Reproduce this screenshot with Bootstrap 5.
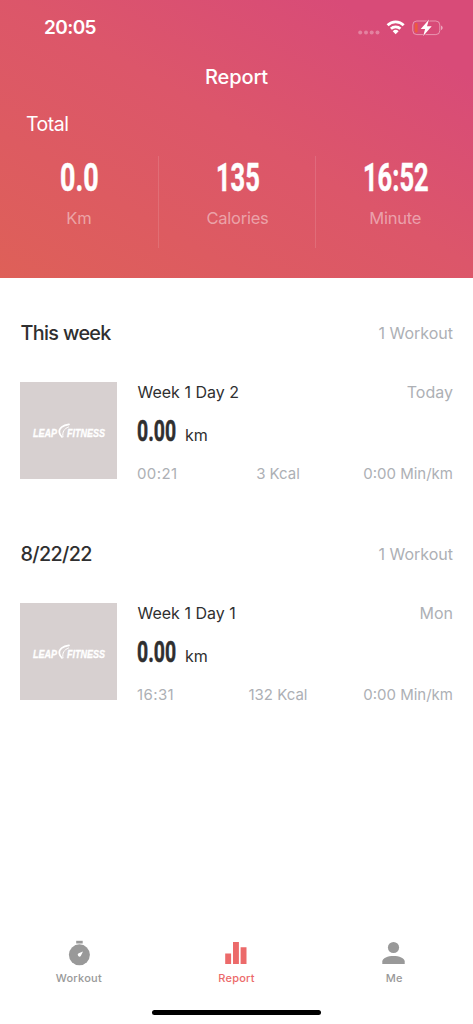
<!DOCTYPE html>
<html lang="en">
<head>
  <meta charset="UTF-8">
  <meta name="viewport" content="width=device-width, initial-scale=1">
  <title>Report</title>
  <link href="https://cdn.jsdelivr.net/npm/bootstrap@5.3.0/dist/css/bootstrap.min.css" rel="stylesheet">
  <script src="https://cdn.jsdelivr.net/npm/bootstrap@5.3.0/dist/js/bootstrap.bundle.min.js" defer></script>
  <style>
    body {
      background-color: #fff;
      color: #2f2f30;
      font-family: Inter, "Liberation Sans", sans-serif;
      height: 1024px;
      overflow: hidden;
    }

    svg {
      display: block;
    }

    .report-header {
      height: 278px;
      background: linear-gradient(to top right, #de6058 0%, #dc566a 52%, #d84b78 86%, #d84b78 100%);
    }

    .status-bar {
      height: 55px;
      padding: 0 30px 0 44px;
    }

    .status-time {
      font-size: 19px;
      font-weight: 600;
      letter-spacing: -0.6px;
      padding-top: 1px;
    }

    .page-title {
      height: 44px;
      font-size: 20px;
      font-weight: 500;
      letter-spacing: -0.1px;
    }

    .total-label {
      height: 50px;
      padding: 2px 0 0 26px;
      font-size: 19.5px;
      letter-spacing: -0.5px;
    }

    .totals {
      padding-top: 7px;
    }

    .total-item {
      height: 92px;
    }

    .total-item + .total-item {
      border-left: 1px solid rgba(255, 255, 255, 0.12);
      padding-left: 1px;
    }

    .total-item svg {
      margin-top: -3px;
    }

    .total-unit {
      margin-top: 3px;
      font-size: 16.5px;
      line-height: 24px;
      letter-spacing: -0.25px;
      color: rgba(255, 255, 255, 0.45);
    }

    /* condensed numerals */
    .digits {
      font-family: Roboto, "Liberation Sans", sans-serif;
      font-weight: 700;
      fill: currentColor;
      stroke: currentColor;
      stroke-width: 0.5px;
    }

    .week-group {
      padding: 35px 20px 10px;
    }

    .week-head {
      height: 40px;
      margin-bottom: 29px;
    }

    .week-title {
      font-size: 19.8px;
      font-weight: 500;
      letter-spacing: -0.65px;
      padding: 2px 0 0 0.5px;
    }

    .muted-text {
      color: #adb0b5;
      font-size: 16px;
    }

    .thumb {
      width: 97px;
      height: 97px;
      flex: none;
      background-color: #d7d0d0;
    }

    .thumb text {
      font: italic 700 10.3px "Liberation Sans", sans-serif;
      fill: #fff;
      stroke: #fff;
      stroke-width: 0.3px;
    }

    .workout-info {
      margin: -2px 0 0 20px;
    }

    .workout-name {
      height: 23px;
      font-size: 16px;
      padding-left: 0.5px;
    }

    .workout-distance {
      height: 55px;
      font-size: 16px;
    }

    .workout-stats {
      display: grid;
      grid-template-columns: 96px 90px 1fr;
      height: 31px;
      padding-top: 2px;
      align-items: center;
      font-size: 15px;
      color: #adb0b5;
    }

    .workout-time {
      letter-spacing: 0.4px;
    }

    .tab-bar {
      height: 94px;
      padding-top: 10px;
    }

    .tab-item {
      color: #999;
      font-size: 11px;
      font-weight: 500;
      letter-spacing: 0.25px;
    }

    .tab-item span {
      line-height: 16px;
      margin-top: 2px;
    }

    .tab-item.selected {
      color: #ec6a6a;
    }

    .home-bar {
      width: 169px;
      height: 5px;
      margin-bottom: 9px;
      background-color: #000;
    }
  </style>
</head>
<body class="d-flex flex-column">

  <header class="report-header text-white">
    <div class="status-bar d-flex align-items-center justify-content-between">
      <span class="status-time">20:05</span>
      <svg width="86" height="20" viewBox="0 0 86 20">
        <!-- signal dots -->
        <g fill="#fff" opacity="0.3">
          <circle cx="3.2" cy="14.5" r="2"/>
          <circle cx="9" cy="14.5" r="2"/>
          <circle cx="14.7" cy="14.5" r="2"/>
          <circle cx="20.5" cy="14.5" r="2"/>
        </g>
        <!-- wifi -->
        <g fill="none" stroke="#fff" stroke-width="2.7">
          <path d="M30.600 7.200a11.200 11.200 0 0 1 16.100 0"/>
          <path d="M33.900 10.800a6.700 6.700 0 0 1 9.500 0"/>
        </g>
        <path fill="#fff" d="M38.650 16.300 35.700 13.300a4.200 4.200 0 0 1 5.900 0z"/>
        <!-- battery -->
        <rect x="55.800" y="3" width="27" height="13.600" rx="4" fill="none" stroke="#fff" stroke-opacity="0.42"/>
        <rect x="57.800" y="5" width="2.800" height="9.600" rx="1" fill="#ec5a3e"/>
        <path fill="#fff" opacity="0.5" d="M84 7.500c2.200.8 2.200 3.800 0 4.600z"/>
        <path fill="#fff" stroke="#d84b78" stroke-width="1.400" paint-order="stroke" d="M72 1.600 63.700 11h4.400l-1.900 7 8.500-9.800h-4.700z"/>
      </svg>
    </div>
    <div class="page-title d-flex align-items-center justify-content-center">Report</div>
    <div class="total-label d-flex align-items-center">Total</div>
    <div class="totals row g-0 text-center">
      <div class="total-item col-4">
        <svg class="digits mx-auto" width="42" height="50"><text transform="translate(2 38) scale(0.680 1)" font-size="39.500">0.0</text></svg>
        <div class="total-unit">Km</div>
      </div>
      <div class="total-item col-4">
        <svg class="digits mx-auto" width="46" height="50"><text transform="translate(2 38) scale(0.645 1)" font-size="39.500">135</text></svg>
        <div class="total-unit">Calories</div>
      </div>
      <div class="total-item col-4">
        <svg class="digits mx-auto" width="68" height="50"><text transform="translate(2 38) scale(0.645 1)" font-size="39.500">16:52</text></svg>
        <div class="total-unit">Minute</div>
      </div>
    </div>
  </header>

  <main class="flex-grow-1">
    <section class="week-group">
      <div class="week-head d-flex align-items-center justify-content-between">
        <span class="week-title">This week</span>
        <span class="muted-text">1 Workout</span>
      </div>
      <div class="d-flex align-items-start">
        <svg class="thumb" viewBox="0 0 97 97">
          <text transform="translate(13 55.200) scale(0.875 1)">LEAP</text>
          <g fill="none" stroke="#fff" stroke-linecap="round">
            <path stroke-width="1.700" d="M49 42.300c-6 .8-10.600 4-9.600 8.400.4 1.700 1.300 3 2.600 4.300"/>
            <path stroke-width="1" d="M48.500 45c-4.600 1.800-6.400 5-5.500 9.800"/>
          </g>
          <text transform="translate(47 55.200) scale(0.875 1)">FITNESS</text>
        </svg>
        <div class="workout-info flex-grow-1">
          <div class="workout-name d-flex align-items-center justify-content-between">
            <span>Week 1 Day 2</span>
            <span class="muted-text">Today</span>
          </div>
          <div class="workout-distance d-flex align-items-center">
            <svg class="digits" width="48" height="40"><text transform="translate(0 29.500) scale(0.670 1)" font-size="29">0.00</text></svg>
            <span class="pt-2">km</span>
          </div>
          <div class="workout-stats">
            <span class="workout-time">00:21</span>
            <span class="text-center">3 Kcal</span>
            <span class="text-end">0:00 Min/km</span>
          </div>
        </div>
      </div>
    </section>

    <section class="week-group">
      <div class="week-head d-flex align-items-center justify-content-between">
        <span class="week-title">8/22/22</span>
        <span class="muted-text">1 Workout</span>
      </div>
      <div class="d-flex align-items-start">
        <svg class="thumb" viewBox="0 0 97 97">
          <text transform="translate(13 55.200) scale(0.875 1)">LEAP</text>
          <g fill="none" stroke="#fff" stroke-linecap="round">
            <path stroke-width="1.700" d="M49 42.300c-6 .8-10.600 4-9.600 8.400.4 1.700 1.300 3 2.600 4.300"/>
            <path stroke-width="1" d="M48.500 45c-4.600 1.800-6.400 5-5.500 9.800"/>
          </g>
          <text transform="translate(47 55.200) scale(0.875 1)">FITNESS</text>
        </svg>
        <div class="workout-info flex-grow-1">
          <div class="workout-name d-flex align-items-center justify-content-between">
            <span>Week 1 Day 1</span>
            <span class="muted-text">Mon</span>
          </div>
          <div class="workout-distance d-flex align-items-center">
            <svg class="digits" width="48" height="40"><text transform="translate(0 29.500) scale(0.670 1)" font-size="29">0.00</text></svg>
            <span class="pt-2">km</span>
          </div>
          <div class="workout-stats">
            <span class="workout-time">16:31</span>
            <span class="text-center">132 Kcal</span>
            <span class="text-end">0:00 Min/km</span>
          </div>
        </div>
      </div>
    </section>
  </main>

  <footer class="tab-bar d-flex flex-column justify-content-between">
    <nav class="row g-0">
      <div class="tab-item col-4 d-flex flex-column align-items-center">
        <svg width="28" height="28" viewBox="0 0 28 28">
          <path fill="currentColor" d="M11.200.800h6.500v2.700h-6.500z"/>
          <circle cx="14.400" cy="14.800" r="10.500" fill="currentColor"/>
          <path fill="#fff" d="M18 11.600l-2.100 4.100a1.700 1.700 0 1 1-2.300-2.400z"/>
        </svg>
        <span>Workout</span>
      </div>
      <div class="tab-item selected col-4 d-flex flex-column align-items-center">
        <svg width="28" height="28" viewBox="0 0 28 28">
          <path fill="currentColor" d="M3.200 13.500h5.900v10.400H3.200zM11 2h5.900v21.900H11zM18.600 7.200h5.900v16.700h-5.900z"/>
        </svg>
        <span>Report</span>
      </div>
      <div class="tab-item col-4 d-flex flex-column align-items-center">
        <svg width="28" height="28" viewBox="0 0 28 28">
          <circle cx="13.500" cy="7.500" r="5.600" fill="currentColor"/>
          <path fill="currentColor" d="M2.300 24v-2.400c0-3.800 5.600-5.700 11.200-5.700s11.200 1.900 11.200 5.700V24z"/>
        </svg>
        <span>Me</span>
      </div>
    </nav>
    <div class="home-bar rounded-pill mx-auto"></div>
  </footer>

</body>
</html>
